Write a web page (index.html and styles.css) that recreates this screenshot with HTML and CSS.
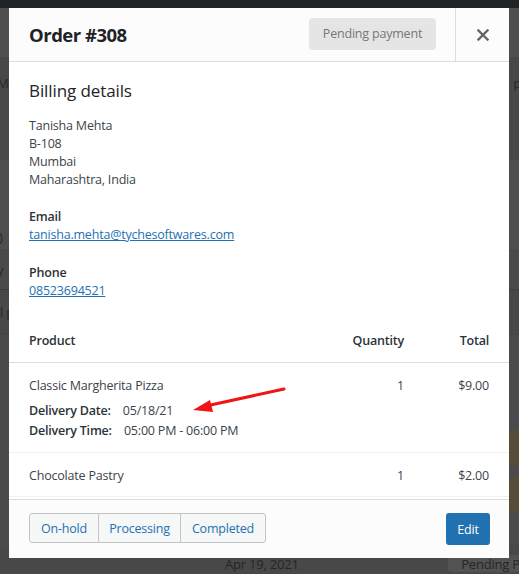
FILE: index.html
```html
<!DOCTYPE html>
<html lang="en">
<head>
<meta charset="utf-8">
<title>Order #308</title>
<link rel="stylesheet" href="styles.css">
</head>
<body>
<div class="bg-page">
  <div class="bg-row bg-top"></div>
  <div class="bg-row bg-r1"></div>
  <div class="bg-row bg-r2"><span class="bg-left">Ma</span><span class="bg-right">p</span></div>
  <div class="bg-row bg-r3"><span class="bg-left bg-paren">)</span></div>
  <div class="bg-row bg-r4"><span class="bg-left">y</span></div>
  <div class="bg-row bg-r5"><span class="bg-right">l p</span></div>
  <div class="bg-row bg-r6"></div>
  <div class="bg-row bg-olive"></div>
  <div class="bg-row bg-r7"></div>
  <div class="bg-row bg-olive"></div>
  <div class="bg-row bg-r8"></div>
  <div class="bg-row bg-last"><span class="bg-date">Apr 19, 2021</span><span class="bg-pill">Pending P</span></div>
</div>

<div class="modal">
  <header class="modal-header">
    <h1 class="modal-title">Order #308</h1>
    <mark class="status">Pending payment</mark>
    <button class="close" aria-label="Close">
      <svg width="12" height="12" viewBox="0 0 12 12"><path d="M1.5 1.5 L10.5 10.5 M10.5 1.5 L1.5 10.5" stroke="#666" stroke-width="2.4" stroke-linecap="square"/></svg>
    </button>
  </header>

  <div class="modal-body">
    <h2 class="section-title">Billing details</h2>
    <p class="address">Tanisha Mehta<br>B-108<br>Mumbai<br>Maharashtra, India</p>
    <div class="field">
      <strong class="field-label">Email</strong>
      <a class="link" href="#">tanisha.mehta@tychesoftwares.com</a>
    </div>
    <div class="field">
      <strong class="field-label">Phone</strong>
      <a class="link" href="#">08523694521</a>
    </div>

    <table class="items">
      <thead>
        <tr><th class="col-product">Product</th><th class="col-qty">Quantity</th><th class="col-total">Total</th></tr>
      </thead>
      <tbody>
        <tr>
          <td class="col-product">
            Classic Margherita Pizza
            <div class="meta">
              <div><strong>Delivery Date:</strong> <span class="meta-val">05/18/21</span></div>
              <div><strong>Delivery Time:</strong> <span class="meta-val">05:00 PM - 06:00 PM</span></div>
            </div>
          </td>
          <td class="col-qty">1</td>
          <td class="col-total">$9.00</td>
        </tr>
        <tr>
          <td class="col-product">Chocolate Pastry</td>
          <td class="col-qty">1</td>
          <td class="col-total">$2.00</td>
        </tr>
      </tbody>
    </table>
  </div>

  <footer class="modal-footer">
    <div class="btn-group">
      <button class="btn btn-onhold">On-hold</button>
      <button class="btn btn-processing">Processing</button>
      <button class="btn btn-completed">Completed</button>
    </div>
    <button class="btn-primary">Edit</button>
  </footer>
</div>

<svg class="arrow" width="519" height="574" viewBox="0 0 519 574">
  <line x1="284" y1="389" x2="206" y2="406" stroke="#f01414" stroke-width="3" stroke-linecap="round"/>
  <polygon points="193,410 210,400 213,412" fill="#f01414"/>
</svg>
</body>
</html>
```

FILE: styles.css
```css
* { box-sizing: border-box; }

html, body {
  margin: 0;
  padding: 0;
}

body {
  width: 519px;
  height: 574px;
  overflow: hidden;
  position: relative;
  font-family: "Open Sans", "Noto Sans", sans-serif;
  font-size: 12.5px;
  letter-spacing: -0.2px;
  line-height: 18px;
  color: #3c434a;
  background: #4b4b4b;
}

/* dimmed page behind the modal */
.bg-page {
  display: flex;
  flex-direction: column;
  height: 574px;
  color: #262626;
  font-size: 13px;
}
.bg-row {
  display: flex;
  align-items: center;
  justify-content: space-between;
  flex: none;
}
.bg-top { height: 8px; background: #1f2427; }
.bg-r1 { height: 49px; background: #4f4f4f; }
.bg-r2 { height: 103px; background: #484848; align-items: flex-start; padding-top: 17px; }
.bg-r3 { height: 91px; background: #4e4e4e; align-items: flex-end; border-bottom: 1px solid #2d4a63; }
.bg-r4 { height: 39px; background: #4a4a4a; border-bottom: 1px solid #3c3c3c; }
.bg-r5 { height: 45px; background: #484848; border-bottom: 1px solid #444; }
.bg-r6 { height: 95px; background: #4b4b4b; }
.bg-olive { height: 35px; background: linear-gradient(to right, #4b4b4b 500px, #564c37 500px); }
.bg-r7 { height: 12px; background: #4b4b4b; }
.bg-r8 { height: 33px; background: #4b4b4b; }
.bg-last { height: 29px; background: #484848; align-items: flex-end; justify-content: flex-start; }
.bg-left { margin-left: -3px; }
.bg-paren { margin-left: -1px; margin-bottom: 4px; }
.bg-right { margin-right: -2px; }
.bg-date { margin-left: 225px; margin-bottom: 1px; }
.bg-pill {
  margin-left: auto;
  margin-right: -14px;
  margin-bottom: 2px;
  background: #525252;
  border-radius: 4px;
  padding: 0 13px;
  height: 17px;
  line-height: 18px;
}

/* modal */
.modal {
  position: absolute;
  left: 9px;
  top: 8px;
  width: 500px;
  height: 550px;
  background: #fff;
  display: flex;
  flex-direction: column;
}

.modal-header {
  flex: none;
  height: 54px;
  background: #fcfcfc;
  border-bottom: 1px solid #dcdcde;
  display: flex;
  align-items: center;
}
.modal-title {
  flex: 1;
  margin: 0;
  padding-left: 20px;
  font-size: 18.5px;
  letter-spacing: -0.5px;
  font-weight: 700;
  color: #1d2327;
  line-height: 26px;
}
.status {
  background: #e5e5e5;
  color: #777;
  border-radius: 4px;
  width: 127px;
  height: 32px;
  line-height: 32px;
  text-align: center;
  margin-right: 19px;
  margin-top: -1px;
}
.close {
  width: 54px;
  height: 53px;
  border: none;
  border-left: 1px solid #dcdcde;
  background: transparent;
  display: flex;
  align-items: center;
  justify-content: center;
  padding: 0;
}

.modal-body {
  flex: 1;
  overflow: hidden;
  padding: 17px 20px 0;
}
.section-title {
  margin: 0;
  font-size: 17px;
  letter-spacing: -0.1px;
  font-weight: 400;
  line-height: 24px;
  color: #1d2327;
}
.address {
  margin: 14px 0 0;
}
.field {
  margin-top: 19px;
  display: flex;
  flex-direction: column;
  align-items: flex-start;
}
.field + .field { margin-top: 20px; }
.field-label {
  font-weight: 600;
  color: #2c3338;
}
.link {
  color: #2271b1;
  text-decoration: underline;
}

.items {
  width: calc(100% + 40px);
  margin: 20px -20px 0;
  border-collapse: collapse;
}
.items th {
  font-weight: 600;
  color: #2c3338;
  padding: 12px 20px 12px;
  border-bottom: 1px solid #dcdcde;
  text-align: left;
}
.items td {
  padding: 14px 20px 11px;
  vertical-align: top;
  border-bottom: 1px solid #f0f0f1;
}
.items .col-qty { text-align: right; padding-right: 20px; }
.items .col-total { text-align: right; width: 85px; padding-left: 0; }
.meta {
  margin-top: 6px;
  line-height: 20px;
}
.meta strong {
  font-weight: 600;
  color: #2c3338;
}
.meta-val { margin-left: 9px; }

.modal-footer {
  flex: none;
  height: 59px;
  background: #fcfcfc;
  border-top: 1px solid #dcdcde;
  display: flex;
  align-items: center;
  justify-content: space-between;
  padding: 0 19px 0 20px;
}
.btn-group {
  display: flex;
  border: 1px solid #c3c4c7;
  border-radius: 3px;
  background: #f6f7f7;
  margin-top: -2px;
}
.btn {
  font-family: inherit;
  font-size: 12.5px;
  letter-spacing: -0.2px;
  color: #2271b1;
  background: transparent;
  border: none;
  height: 28px;
  padding: 0;
  text-align: center;
}
.btn-onhold { width: 68px; }
.btn-processing { width: 82px; }
.btn-completed { width: 85px; }
.btn + .btn { border-left: 1px solid #c3c4c7; }
.btn-primary {
  font-family: inherit;
  font-size: 12.5px;
  letter-spacing: -0.2px;
  color: #fff;
  background: #2271b1;
  border: none;
  border-radius: 3px;
  width: 44px;
  height: 32px;
  padding: 0;
}

.arrow {
  position: absolute;
  left: 0;
  top: 0;
  pointer-events: none;
}
```
